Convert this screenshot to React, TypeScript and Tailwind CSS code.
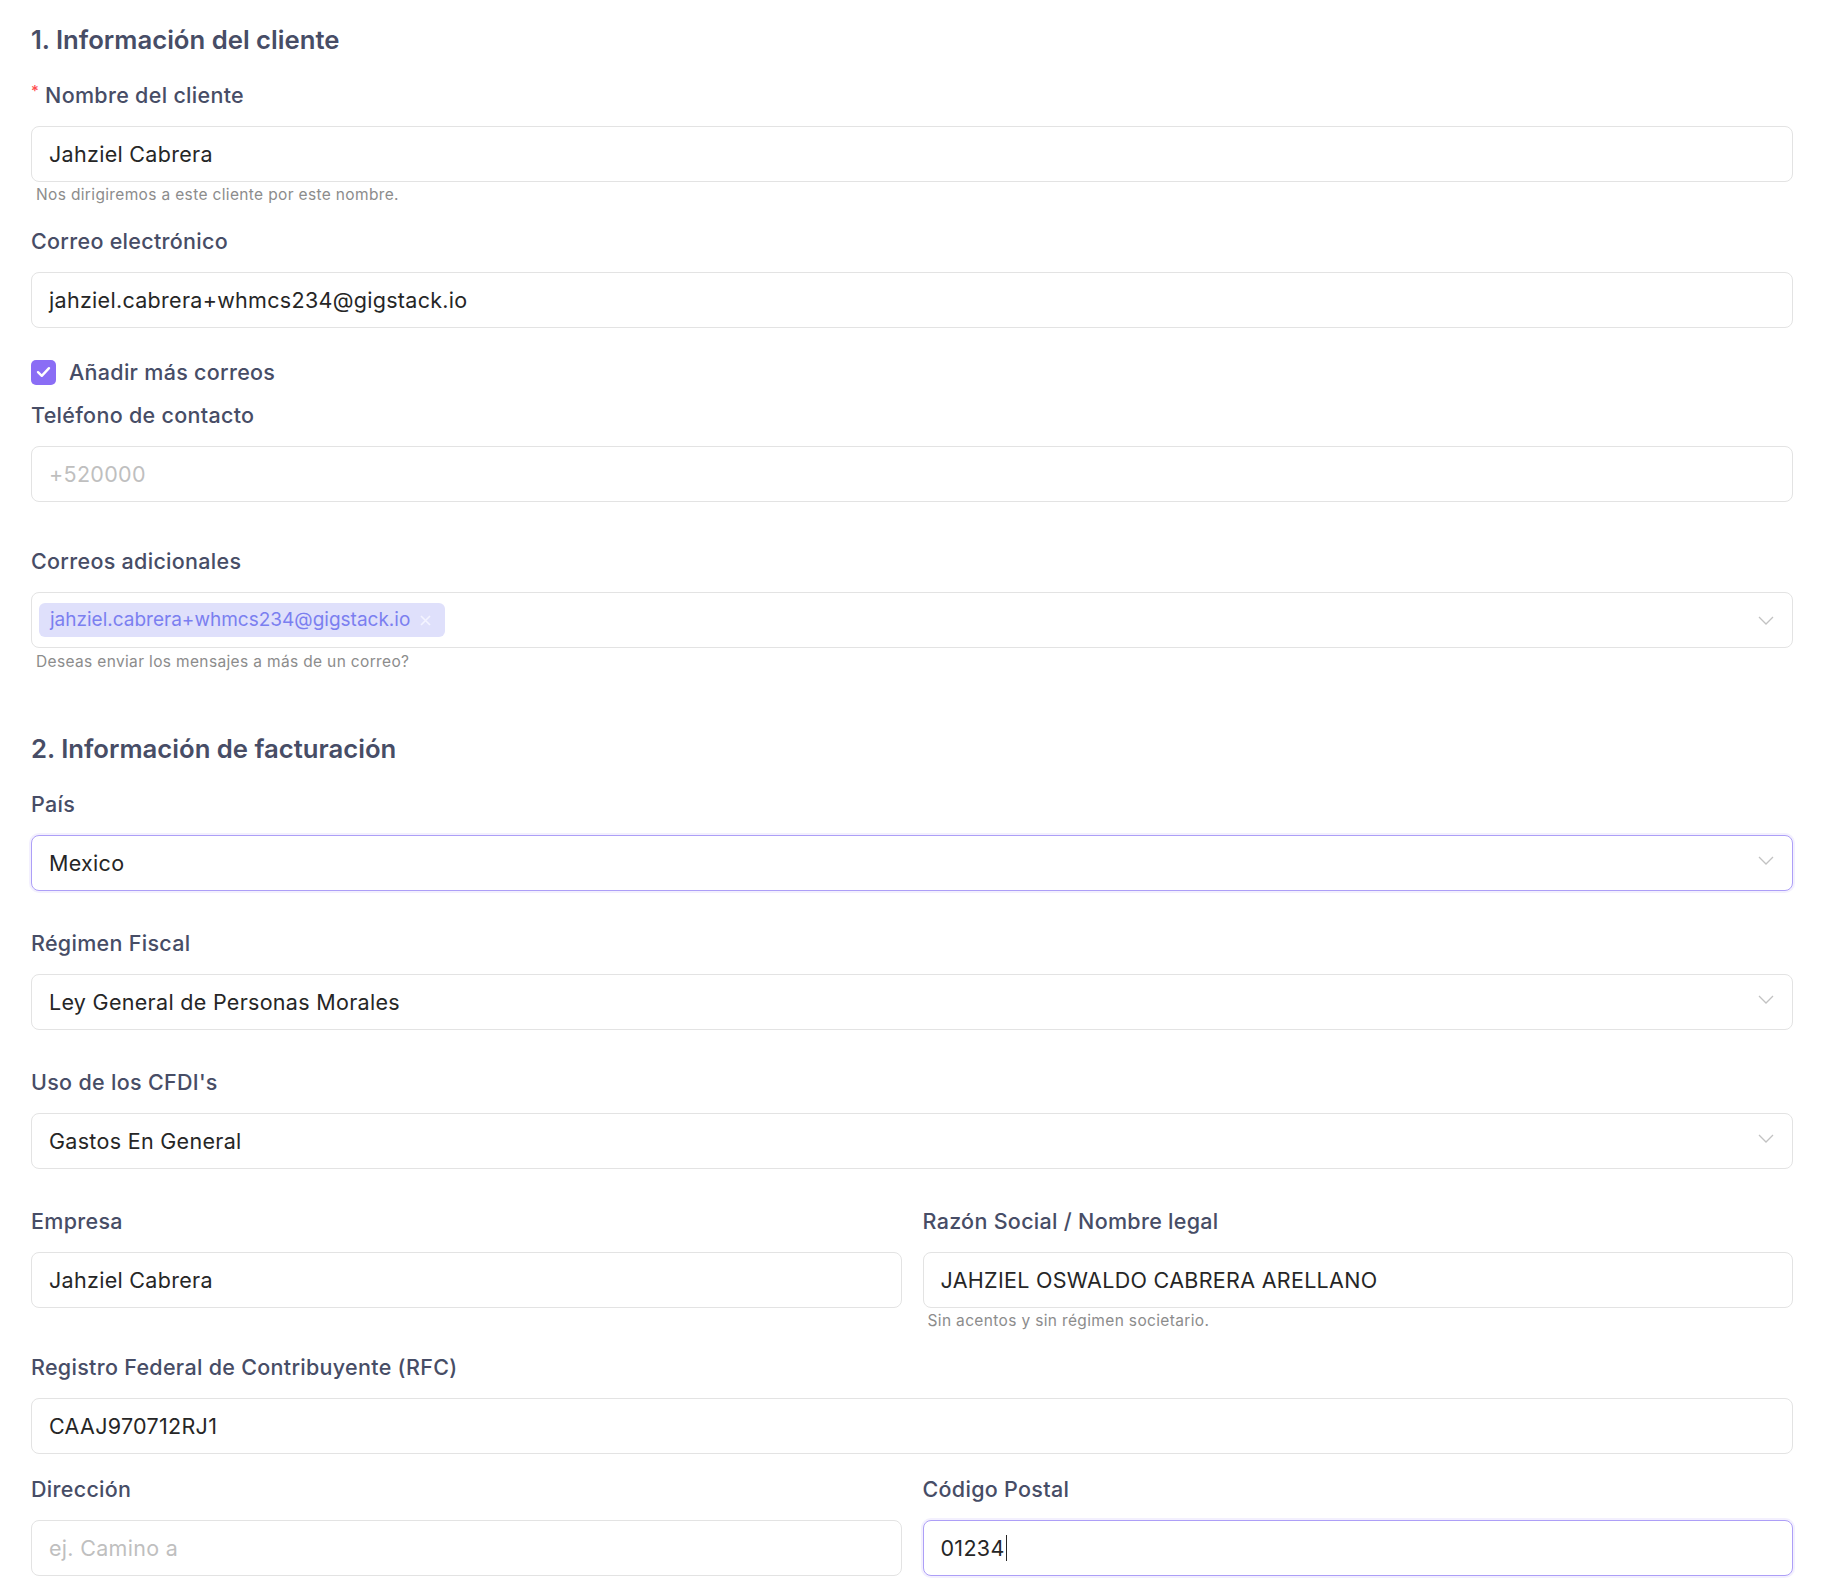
import React from "react";

const font = { fontFamily: "Inter, 'Noto Sans', sans-serif" };

function Chevron({ up }: { up?: boolean }) {
  return (
    <svg width="16" height="9" viewBox="0 0 16 9" fill="none" className={"shrink-0 " + (up ? "-mt-[6px]" : "")}>
      <polyline points="1,1 8,8 15,1" stroke="#c2c2c2" strokeWidth="1.3" fill="none" />
    </svg>
  );
}

function Label({ children, required }: { children: React.ReactNode; required?: boolean }) {
  return (
    <div className="h-[28px] flex items-center text-[21.5px] tracking-[0.3px] font-medium text-[#474d66] leading-[28px] mb-[17px]">
      {required && <span className="text-[#ff4d4f] text-[15px] mr-[6px] -mt-[8px]">*</span>}
      {children}
    </div>
  );
}

function Box({
  children,
  focused,
  select,
  placeholder,
}: {
  children?: React.ReactNode;
  focused?: boolean;
  select?: boolean;
  placeholder?: boolean;
}) {
  return (
    <div
      className={
        "h-[56px] rounded-[8px] bg-white flex items-center pl-[17px] pr-[18px] text-[21.5px] tracking-[0.3px] " +
        (focused
          ? "border border-[#ad9ff7] shadow-[0_0_0_2px_rgba(140,110,245,0.10)] "
          : "border border-[#e3e3e3] ") +
        (placeholder ? "text-[#bfbfbf]" : "text-[#262626]")
      }
    >
      <div className="flex-1 flex items-center min-w-0">{children}</div>
      {select && <Chevron up />}
    </div>
  );
}

function Help({ children, mt }: { children: React.ReactNode; mt?: string }) {
  return (
    <div className={(mt || "mt-[3px]") + " h-[20px] pl-[5px] text-[15.5px] leading-[20px] text-[#8c8c8c] tracking-[0.35px]"}>
      {children}
    </div>
  );
}

export default function App() {
  return (
    <div className="w-[1832px] min-h-[1594px] bg-white pl-[31px] pr-[39px] pt-[24px]" style={font}>
      <h2 className="h-[32px] leading-[32px] text-[25.7px] font-semibold text-[#474d66] mb-[25px]">
        1. Información del cliente
      </h2>

      <Label required>Nombre del cliente</Label>
      <Box>Jahziel Cabrera</Box>
      <Help>Nos dirigiremos a este cliente por este nombre.</Help>

      <div className="mt-[22px]">
        <Label>Correo electrónico</Label>
        <Box>jahziel.cabrera+whmcs234@gigstack.io</Box>
      </div>

      <div className="mt-[30px] h-[28px] flex items-center">
        <div className="w-[25px] h-[25px] rounded-[5px] bg-[#8a6df5] flex items-center justify-center">
          <svg width="15" height="12" viewBox="0 0 15 12" fill="none">
            <polyline points="2,6.2 5.8,9.8 13,2.2" stroke="white" strokeWidth="2.4" fill="none" strokeLinecap="round" strokeLinejoin="round" />
          </svg>
        </div>
        <span className="ml-[13px] text-[21.5px] tracking-[0.3px] font-medium text-[#474d66]">Añadir más correos</span>
      </div>

      <div className="mt-[15px]">
        <Label>Teléfono de contacto</Label>
        <Box placeholder>+520000</Box>
      </div>

      <div className="mt-[45px]">
        <Label>Correos adicionales</Label>
        <div className="h-[56px] rounded-[8px] bg-white border border-[#e3e3e3] flex items-center pl-[7px] pr-[18px]">
          <div className="flex-1 flex items-center">
            <div className="h-[34px] rounded-[6px] bg-[#dfe0fb] flex items-center pl-[11px] pr-[13px] text-[19px] text-[#7b7ff0]">
              jahziel.cabrera+whmcs234@gigstack.io
              <svg width="13" height="13" viewBox="0 0 13 13" className="ml-[9px]">
                <path d="M2 2 L11 11 M11 2 L2 11" stroke="#f4f4ff" strokeWidth="1.6" />
              </svg>
            </div>
          </div>
          <Chevron />
        </div>
        <Help mt="mt-[4px]">Deseas enviar los mensajes a más de un correo?</Help>
      </div>

      <h2 className="mt-[61px] h-[32px] leading-[32px] text-[25.7px] font-semibold text-[#474d66] mb-[25px]">
        2. Información de facturación
      </h2>

      <Label>País</Label>
      <Box select focused>Mexico</Box>

      <div className="mt-[38px]">
        <Label>Régimen Fiscal</Label>
        <Box select>Ley General de Personas Morales</Box>
      </div>

      <div className="mt-[38px]">
        <Label>Uso de los CFDI's</Label>
        <Box select>Gastos En General</Box>
      </div>

      <div className="mt-[38px] grid grid-cols-2 gap-x-[21px]">
        <div>
          <Label>Empresa</Label>
          <Box>Jahziel Cabrera</Box>
        </div>
        <div>
          <Label>Razón Social / Nombre legal</Label>
          <Box>JAHZIEL OSWALDO CABRERA ARELLANO</Box>
          <Help>Sin acentos y sin régimen societario.</Help>
        </div>
      </div>

      <div className="mt-[22px]">
        <Label>Registro Federal de Contribuyente (RFC)</Label>
        <Box>CAAJ970712RJ1</Box>
      </div>

      <div className="mt-[21px] grid grid-cols-2 gap-x-[21px]">
        <div>
          <Label>Dirección</Label>
          <Box placeholder>ej. Camino a</Box>
        </div>
        <div>
          <Label>Código Postal</Label>
          <Box focused>
            01234
            <span className="inline-block w-[1.5px] h-[26px] bg-[#262626] ml-[1px]" />
          </Box>
        </div>
      </div>
    </div>
  );
}
